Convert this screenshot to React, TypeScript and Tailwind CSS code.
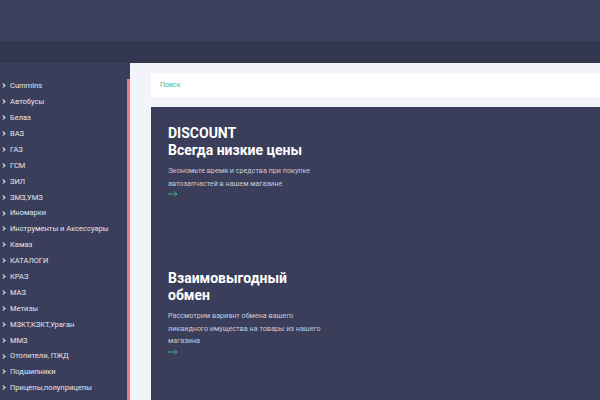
const categories = [
  'Cummins',
  'Автобусы',
  'Белаз',
  'ВАЗ',
  'ГАЗ',
  'ГСМ',
  'ЗИЛ',
  'ЗМЗ,УМЗ',
  'Иномарки',
  'Инструменты и Аксессуары',
  'Камаз',
  'КАТАЛОГИ',
  'КРАЗ',
  'МАЗ',
  'Метизы',
  'МЗКТ,КЗКТ,Ураган',
  'ММЗ',
  'Отопители, ПЖД',
  'Подшипники',
  'Прицепы,полуприцепы',
];

function Chevron() {
  return (
    <svg width="4" height="5" viewBox="0 0 4 5" className="ml-[2px] mr-[4px]">
      <path d="M0.8 0.6L3 2.5 0.8 4.4" fill="none" stroke="#e3e4ec" strokeWidth="1.1" />
    </svg>
  );
}

function Arrow() {
  return (
    <svg width="10" height="6" viewBox="0 0 10 6" className="mt-[1px]">
      <path d="M0 3h9M6.5 0.8L9 3 6.5 5.2" fill="none" stroke="#3fb27f" strokeWidth="1" />
    </svg>
  );
}

function Promo({ title, text }: { title: React.ReactNode; text: string }) {
  return (
    <div>
      <h2 className="w-[152px] text-[14px] font-bold leading-[16.5px] text-white">{title}</h2>
      <p className="mt-[7px] w-[158px] text-[7.2px] leading-[12.5px] text-[#c9cad8]">{text}</p>
      <Arrow />
    </div>
  );
}

export default function App() {
  return (
    <div className="h-[400px] w-[600px] overflow-hidden bg-[#f3f4f9] font-['Roboto',sans-serif]">
      <div className="h-[41px] bg-[#3c3f5c]" />
      <div className="h-[22px] bg-[#33364f]" />
      <div className="flex">
        <aside className="w-[127px] shrink-0 bg-[#3b3e5b] pt-[15px]">
          <ul>
            {categories.map((c) => (
              <li key={c} className="flex h-[15.9px] items-center text-[7.5px] text-[#e3e4ec]">
                <Chevron />
                {c}
              </li>
            ))}
          </ul>
        </aside>
        <div className="flex w-[3px] shrink-0 flex-col">
          <div className="h-[16px] bg-[#3b3e5b]" />
          <div className="flex-1 bg-[#f07a7e]" />
        </div>
        <main className="flex-1 pl-[21px] pt-[10px]">
          <div className="flex h-[24px] items-center bg-white pl-[9px] text-[7px] text-[#4cb183]">
            Поиск
          </div>
          <section className="mt-[10px] h-[300px] bg-[#3b3e5b] pl-[17px] pt-[18px]">
            <Promo
              title={
                <>
                  DISCOUNT
                  <br />
                  Всегда низкие цены
                </>
              }
              text="Экономьте время и средства при покупке автозапчастей в нашем магазине"
            />
            <div className="mt-[73px]">
              <Promo
                title="Взаимовыгодный обмен"
                text="Рассмотрим вариант обмена вашего ликвидного имущества на товары из нашего магазина"
              />
            </div>
          </section>
        </main>
      </div>
    </div>
  );
}
